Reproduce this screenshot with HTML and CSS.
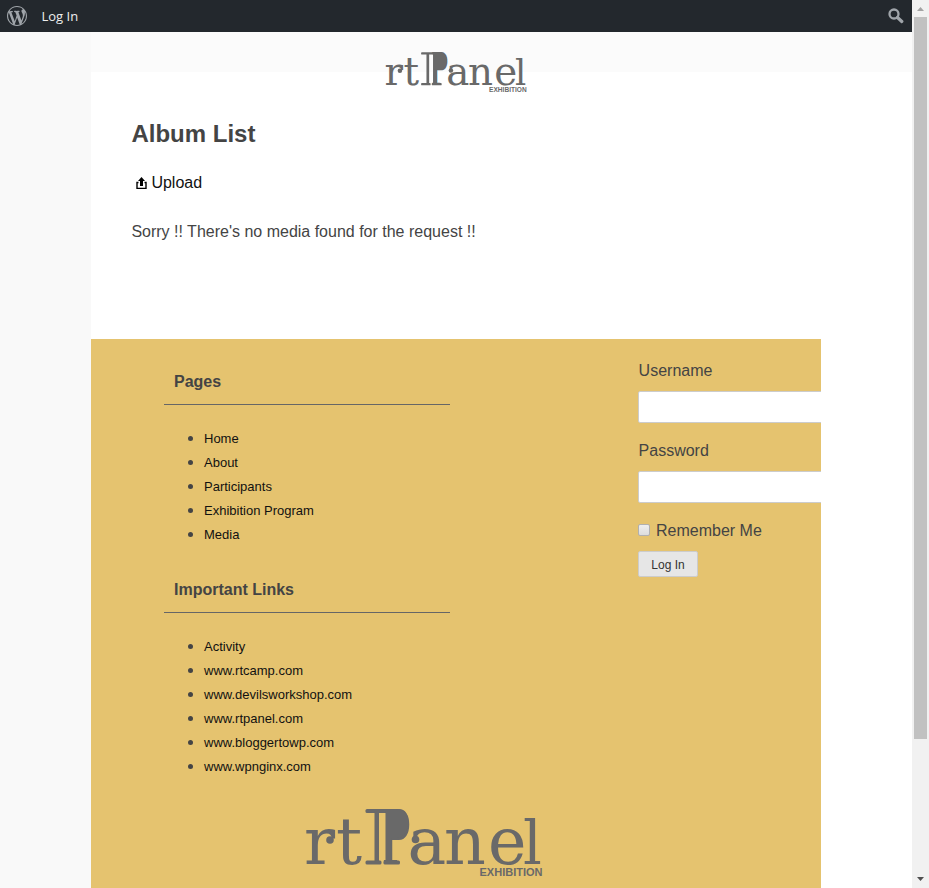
FILE: index.html
```html
<!DOCTYPE html>
<html lang="en">
<head>
<meta charset="utf-8">
<title>Album List</title>
<link rel="stylesheet" href="styles.css">
</head>
<body>
<svg class="defs" aria-hidden="true">
  <symbol id="brand" viewBox="0 0 238 68">
    <g class="brand-letters">
      <text x="-1 31" y="55">rt</text>
      <text class="brand-p" transform="translate(76.500 55) scale(.58 1)">P</text>
      <text x="102.500 139 183" y="55">ane</text>
      <text class="brand-l" x="218" y="55">l</text>
    </g>
    <circle cx="25" cy="31" r="3.800"/>
    <circle cx="110.500" cy="30.500" r="3.800"/>
    <rect x="60.500" y="0" width="32" height="4" rx="1.500"/>
    <rect x="69.500" y="2" width="4.500" height="52"/>
    <rect x="80.500" y="2" width="6" height="52"/>
    <rect x="60.500" y="51.500" width="16" height="4" rx="1.500"/>
    <rect x="78.500" y="51.500" width="16.500" height="4" rx="1.500"/>
    <path d="M82 0h9c8 0 12.500 5 12.500 13.500S98 29 91 29h-9z"/>
    <text class="brand-sub" x="174.500" y="67" textLength="63" lengthAdjust="spacingAndGlyphs">EXHIBITION</text>
  </symbol>
</svg>
<div class="window">
  <div class="page">
    <nav class="adminbar">
      <svg class="wp" viewBox="0 0 20 20"><path d="M20 10c0-5.510-4.490-10-10-10C4.480 0 0 4.490 0 10c0 5.520 4.480 10 10 10 5.510 0 10-4.480 10-10zM7.780 15.370L4.370 6.220c.55-.02 1.170-.08 1.170-.08.5-.06.44-1.130-.06-1.110 0 0-1.450.11-2.370.11-.18 0-.37 0-.58-.01C4.120 2.690 6.870 1.110 10 1.110c2.330 0 4.450.87 6.050 2.340-.68-.11-1.650.39-1.650 1.580 0 .74.45 1.360.9 2.100.35.61.55 1.360.55 2.460 0 1.490-1.400 5-1.400 5l-3.030-8.370c.54-.02.82-.17.82-.17.5-.05.44-1.250-.06-1.220 0 0-1.440.12-2.380.12-.87 0-2.330-.12-2.330-.12-.5-.03-.56 1.200-.06 1.220l.92.08 1.260 3.410zM17.410 10c.24-.64.74-1.870.43-4.250.7 1.290 1.050 2.710 1.050 4.250 0 3.290-1.730 6.240-4.400 7.780.97-2.590 1.940-5.200 2.920-7.780zM6.100 18.090C3.120 16.650 1.110 13.530 1.110 10c0-1.300.23-2.480.72-3.590C3.250 10.300 4.670 14.200 6.100 18.090zm4.030-6.630l2.580 6.980c-.86.29-1.760.45-2.710.45-.79 0-1.570-.11-2.290-.33.81-2.380 1.620-4.740 2.420-7.100z"/></svg>
      <a class="bar-link">Log In</a>
      <svg class="search" viewBox="0 0 16 16"><circle cx="6" cy="6" r="4.500"/><path d="M9.500 9.500l4.300 4"/></svg>
    </nav>
    <div class="canvas">
      <header class="header">
        <div class="header-inner"><svg class="logo"><use href="#brand"/></svg></div>
      </header>
      <main class="content">
        <h1>Album List</h1>
        <a class="upload"><svg viewBox="0 0 11 12"><path class="tray" d="M2.500 5.500H1v6h9v-6H8.500"/><path d="M5.500 0L9 4H7v5H4V4H2z"/></svg>Upload</a>
        <p>Sorry !! There's no media found for the request !!</p>
      </main>
      <footer class="footer">
        <div class="footer-cols">
          <div class="widgets">
            <section class="widget">
              <h2>Pages</h2>
              <ul><li><a>Home</a></li><li><a>About</a></li><li><a>Participants</a></li><li><a>Exhibition Program</a></li><li><a>Media</a></li></ul>
            </section>
            <section class="widget">
              <h2>Important Links</h2>
              <ul><li><a>Activity</a></li><li><a>www.rtcamp.com</a></li><li><a>www.devilsworkshop.com</a></li><li><a>www.rtpanel.com</a></li><li><a>www.bloggertowp.com</a></li><li><a>www.wpnginx.com</a></li></ul>
            </section>
          </div>
          <form class="login">
            <label for="user">Username</label>
            <input class="field" id="user" type="text">
            <label for="pass">Password</label>
            <input class="field" id="pass" type="password">
            <label class="remember"><input type="checkbox">Remember Me</label>
            <button type="button">Log In</button>
          </form>
        </div>
        <svg class="footer-logo"><use href="#brand"/></svg>
      </footer>
    </div>
  </div>
  <div class="scrollbar">
    <svg class="arrow up" viewBox="0 0 7 4"><path d="M3.500 0L7 4H0z"/></svg>
    <div class="thumb"></div>
    <svg class="arrow down" viewBox="0 0 7 4"><path d="M0 0h7L3.500 4z"/></svg>
  </div>
</div>
</body>
</html>
```
FILE: styles.css
```css
* { box-sizing: border-box; }
body { margin: 0; overflow: hidden; color: #444; background: #fff; font: 16px/24px "Liberation Sans", Arial, sans-serif; }
.defs { display: none; }
.window { display: flex; height: 888px; overflow: hidden; }
.page { width: 912px; background: linear-gradient(to right, #f9f9f9 91px, #fff 91px); }
.adminbar { display: flex; align-items: center; height: 32px; padding: 0 8px 0 7px; background: #23282d; }
.wp { width: 20px; height: 20px; fill: #a0a5aa; }
.bar-link { flex: 1; margin-left: 14.5px; color: #eee; font: 13px/32px "Open Sans", sans-serif; }
.search { width: 16px; height: 16px; fill: none; stroke: #a0a5aa; stroke-width: 2.3; }
.search path { stroke-width: 3.2; stroke-linecap: round; }
.canvas { margin-left: 91px; }
.header { height: 40px; background: #fbfbfb; }
.header-inner { display: flex; justify-content: center; width: 730px; padding-top: 20px; }
.logo { flex: none; width: 142px; height: 41px; fill: #696969; }
.brand-letters { font: 65px "DejaVu Serif", serif; }
.brand-p { font-size: 75px; }
.brand-l { font-size: 59px; }
.brand-sub { font: bold 11px "Liberation Sans", Arial, sans-serif; }
.content { display: flex; flex-direction: column; align-items: flex-start; width: 730px; height: 267px; padding: 45px 40px 0 40.4px; }
h1 { margin: 0; font-size: 24px; line-height: 34px; }
.upload { display: flex; align-items: center; margin: 20px 0 0 4.6px; color: #111; }
.upload svg { width: 11px; height: 12px; margin: 0 4.4px 0 0; fill: #000; }
.upload .tray { fill: none; stroke: #000; stroke-width: 1.4; }
.content p { margin: 25px 0 0; }
.footer { display: flex; flex-direction: column; width: 730px; height: 549px; overflow: hidden; background: #e5c36f; }
.footer-cols { display: flex; height: 470px; padding: 18px 0 0 73px; }
.widgets { width: 286px; margin-right: 188px; }
.widget { height: 208px; }
h2 { height: 48px; margin: 0; padding: 12px 10px; border-bottom: 1px solid #666; font-size: 16px; line-height: 25px; }
ul { margin: 0; padding: 21px 0 0 40px; font-size: 13px; }
li::marker { font-size: 16px; }
li { height: 24px; }
li a { color: #111; }
.login { display: flex; flex-direction: column; align-items: flex-start; width: 183px; padding-top: 2px; }
.login label { margin-left: 0.6px; }
.field { flex: none; width: 230px; height: 32px; margin: 8px 0 16px; border: 1px solid #ccc; border-radius: 2px; background: #fff; }
.login .remember { display: flex; align-items: center; margin-left: 0; }
.remember input { appearance: none; width: 12px; height: 12px; margin: -3px 6px 0 0; border: 1px solid #b0b0b0; border-radius: 2px; background: linear-gradient(#eee, #ddd); }
button { width: 60px; height: 26px; margin-top: 8px; padding: 1px 0 0; border: 1px solid #ccc; border-radius: 2px; background: #e6e6e6; color: #333; font: 12px "Liberation Sans", Arial, sans-serif; }
.footer-logo { flex: none; width: 238px; height: 68px; margin-left: 214px; fill: #696969; }
.scrollbar { display: flex; flex-direction: column; align-items: center; width: 17px; background: #f1f1f1; }
.arrow { width: 7px; height: 4px; fill: #505050; }
.up { margin: 7px 0 6px; fill: #a3a3a3; }
.thumb { width: 13px; height: 722px; background: #c1c1c1; }
.down { margin: auto 0 7px; }
```
